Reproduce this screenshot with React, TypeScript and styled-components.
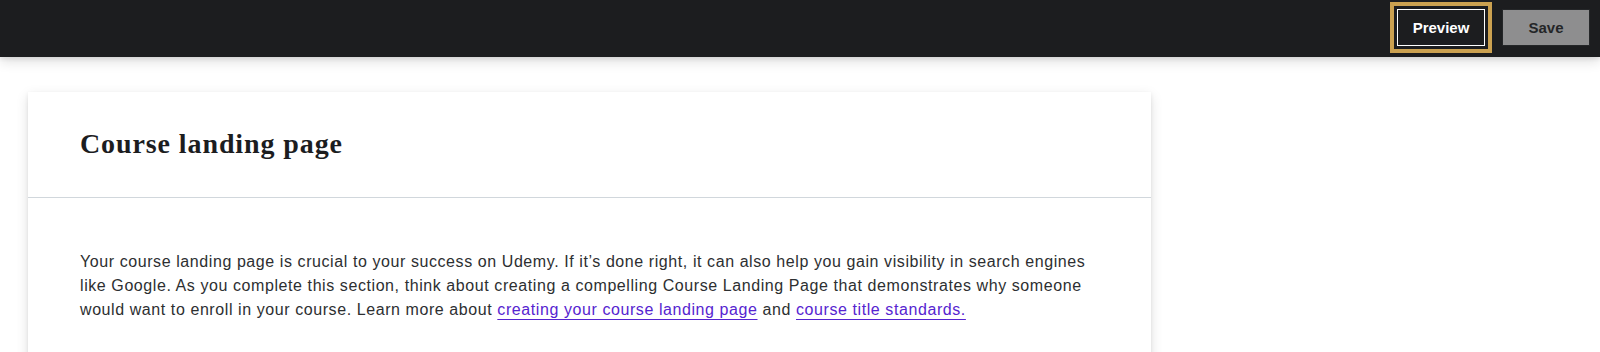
import React from 'react';
import styled, { createGlobalStyle } from 'styled-components';

const GlobalStyle = createGlobalStyle`
  html, body {
    margin: 0;
    padding: 0;
    background: #fff;
    font-family: 'Liberation Sans', Arial, sans-serif;
    color: #2d2f31;
  }
`;

const TopBar = styled.header`
  position: relative;
  z-index: 2;
  box-sizing: border-box;
  height: 57px;
  padding: 9px 10px 0;
  display: flex;
  justify-content: flex-end;
  align-items: flex-start;
  gap: 17px;
  background: #1c1d1f;
  box-shadow: 0 2px 4px rgba(0, 0, 0, 0.08), 0 4px 12px rgba(0, 0, 0, 0.14);
`;

const BarButton = styled.button<{ $variant: 'dark' | 'disabled'; $focused?: boolean }>`
  box-sizing: border-box;
  height: 37px;
  width: 88px;
  padding: 0 12px;
  font-family: 'Liberation Sans', Arial, sans-serif;
  font-size: 15px;
  font-weight: bold;
  border-radius: 0;
  cursor: pointer;
  color: ${(p) => (p.$variant === 'dark' ? '#fff' : '#2d2f31')};
  background: ${(p) => (p.$variant === 'dark' ? '#1c1d1f' : '#fff')};
  border: 1px solid ${(p) => (p.$variant === 'dark' ? '#fff' : '#2d2f31')};
  opacity: ${(p) => (p.$variant === 'disabled' ? 0.5 : 1)};
  outline: ${(p) => (p.$focused ? '4px solid #cba150' : 'none')};
  outline-offset: 3px;
`;

const Page = styled.main`
  padding: 35px 0 0 28px;
`;

const Card = styled.section`
  width: 1123px;
  background: #fff;
  box-shadow: 0 2px 4px rgba(0, 0, 0, 0.08), 0 4px 12px rgba(0, 0, 0, 0.12);
`;

const CardHeader = styled.div`
  padding: 35px 52px 36px;
  border-bottom: 1px solid #d1d7dc;
`;

const Title = styled.h2`
  margin: 0;
  font-family: 'Liberation Serif', 'Times New Roman', serif;
  font-size: 28px;
  font-weight: bold;
  letter-spacing: 0.9px;
  line-height: 1.2;
  color: #1c1d1f;
`;

const CardBody = styled.div`
  padding: 52px 44px 48px 52px;
`;

const Intro = styled.p`
  margin: 0;
  font-size: 16px;
  letter-spacing: 0.58px;
  line-height: 24.4px;
  color: #2d2f31;
`;

const Link = styled.a`
  color: #5624d0;
  text-decoration: underline;
  text-decoration-thickness: 1px;
  text-underline-offset: 4px;
`;

export default function App() {
  return (
    <>
      <GlobalStyle />
      <TopBar>
        <BarButton $variant="dark" $focused>
          Preview
        </BarButton>
        <BarButton $variant="disabled" disabled>
          Save
        </BarButton>
      </TopBar>
      <Page>
        <Card>
          <CardHeader>
            <Title>Course landing page</Title>
          </CardHeader>
          <CardBody>
            <Intro>
              Your course landing page is crucial to your success on Udemy. If it’s done right, it can also
              help you gain visibility in search engines like Google. As you complete this section, think
              about creating a compelling Course Landing Page that demonstrates why someone would want to
              enroll in your course. Learn more about{' '}
              <Link href="#">creating your course landing page</Link> and{' '}
              <Link href="#">course title standards.</Link>
            </Intro>
          </CardBody>
        </Card>
      </Page>
    </>
  );
}
